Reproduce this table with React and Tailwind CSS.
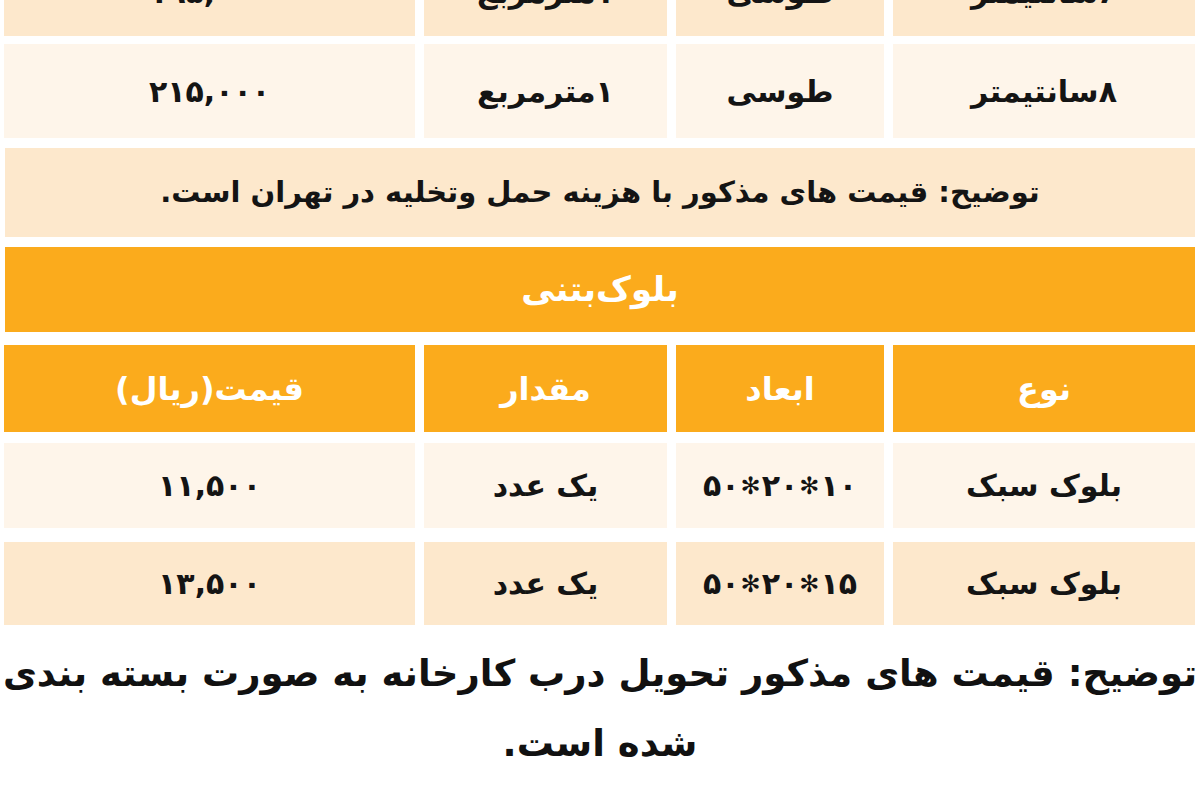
const FONT = { fontFamily: '"DejaVu Sans", "Noto Sans", sans-serif' };

const PEACH = 'bg-[#fde8cc]';
const LIGHT = 'bg-[#fef5ea]';

const X = <span className="text-[24px] mx-[1px]">✻</span>;

const topRows = [
  { h: 'h-[88px]', bg: PEACH, cells: ['۶سانتیمتر', 'طوسی', '۱مترمربع', '۱۹۵,۰۰۰'] },
  { h: 'h-[94px]', bg: LIGHT, cells: ['۸سانتیمتر', 'طوسی', '۱مترمربع', '۲۱۵,۰۰۰'] },
];

const blockRows = [
  { h: 'h-[85px]', bg: LIGHT, cells: ['بلوک سبک', <>۱۰{X}۲۰{X}۵۰</>, 'یک عدد', '۱۱,۵۰۰'] },
  { h: 'h-[83px]', bg: PEACH, cells: ['بلوک سبک', <>۱۵{X}۲۰{X}۵۰</>, 'یک عدد', '۱۳,۵۰۰'] },
];

function Row({ h, bg, cells, head }) {
  return (
    <div className={`grid grid-cols-[302px_208px_243px_411px] gap-x-[9px] ${h}`}>
      {cells.map((c, i) => (
        <div
          key={i}
          className={`flex items-center justify-center font-bold ${head ? 'bg-[#fbab1c] text-white text-[32px]' : `${bg} text-[#141414] text-[30px]`}`}
        >
          {c}
        </div>
      ))}
    </div>
  );
}

export default function App() {
  return (
    <div dir="rtl" style={FONT} className="w-[1200px] h-[800px] bg-white overflow-hidden">
      <div className="flex flex-col px-[5px] -mt-[52px]">
        {/* rest of the tiles table */}
        <Row {...topRows[0]} />
        <div className="h-[8px]" />
        <Row {...topRows[1]} />
        <div className="h-[10px]" />
        <div className={`h-[89px] ${PEACH} flex items-center justify-center text-[29px] font-bold text-[#141414]`}>
          توضیح: قیمت های مذکور با  هزینه حمل وتخلیه در تهران است.
        </div>

        {/* concrete blocks */}
        <div className="h-[10px]" />
        <div className="h-[85px] bg-[#fbab1c] flex items-center justify-center text-[34px] font-bold text-white">
          بلوک‌بتنی
        </div>
        <div className="h-[13px]" />
        <Row head h="h-[87px]" cells={['نوع', 'ابعاد', 'مقدار', 'قیمت(ریال)']} />
        <div className="h-[11px]" />
        <Row {...blockRows[0]} />
        <div className="h-[14px]" />
        <Row {...blockRows[1]} />
      </div>

      <div className="mt-[14px] flex flex-col items-center text-[37px] font-bold text-[#111] leading-[70px]">
        <div className="w-full flex justify-center overflow-hidden">
          <span className="whitespace-nowrap">توضیح: قیمت های مذکور تحویل درب کارخانه  به صورت بسته بندی</span>
        </div>
        <span>شده است.</span>
      </div>
    </div>
  );
}
